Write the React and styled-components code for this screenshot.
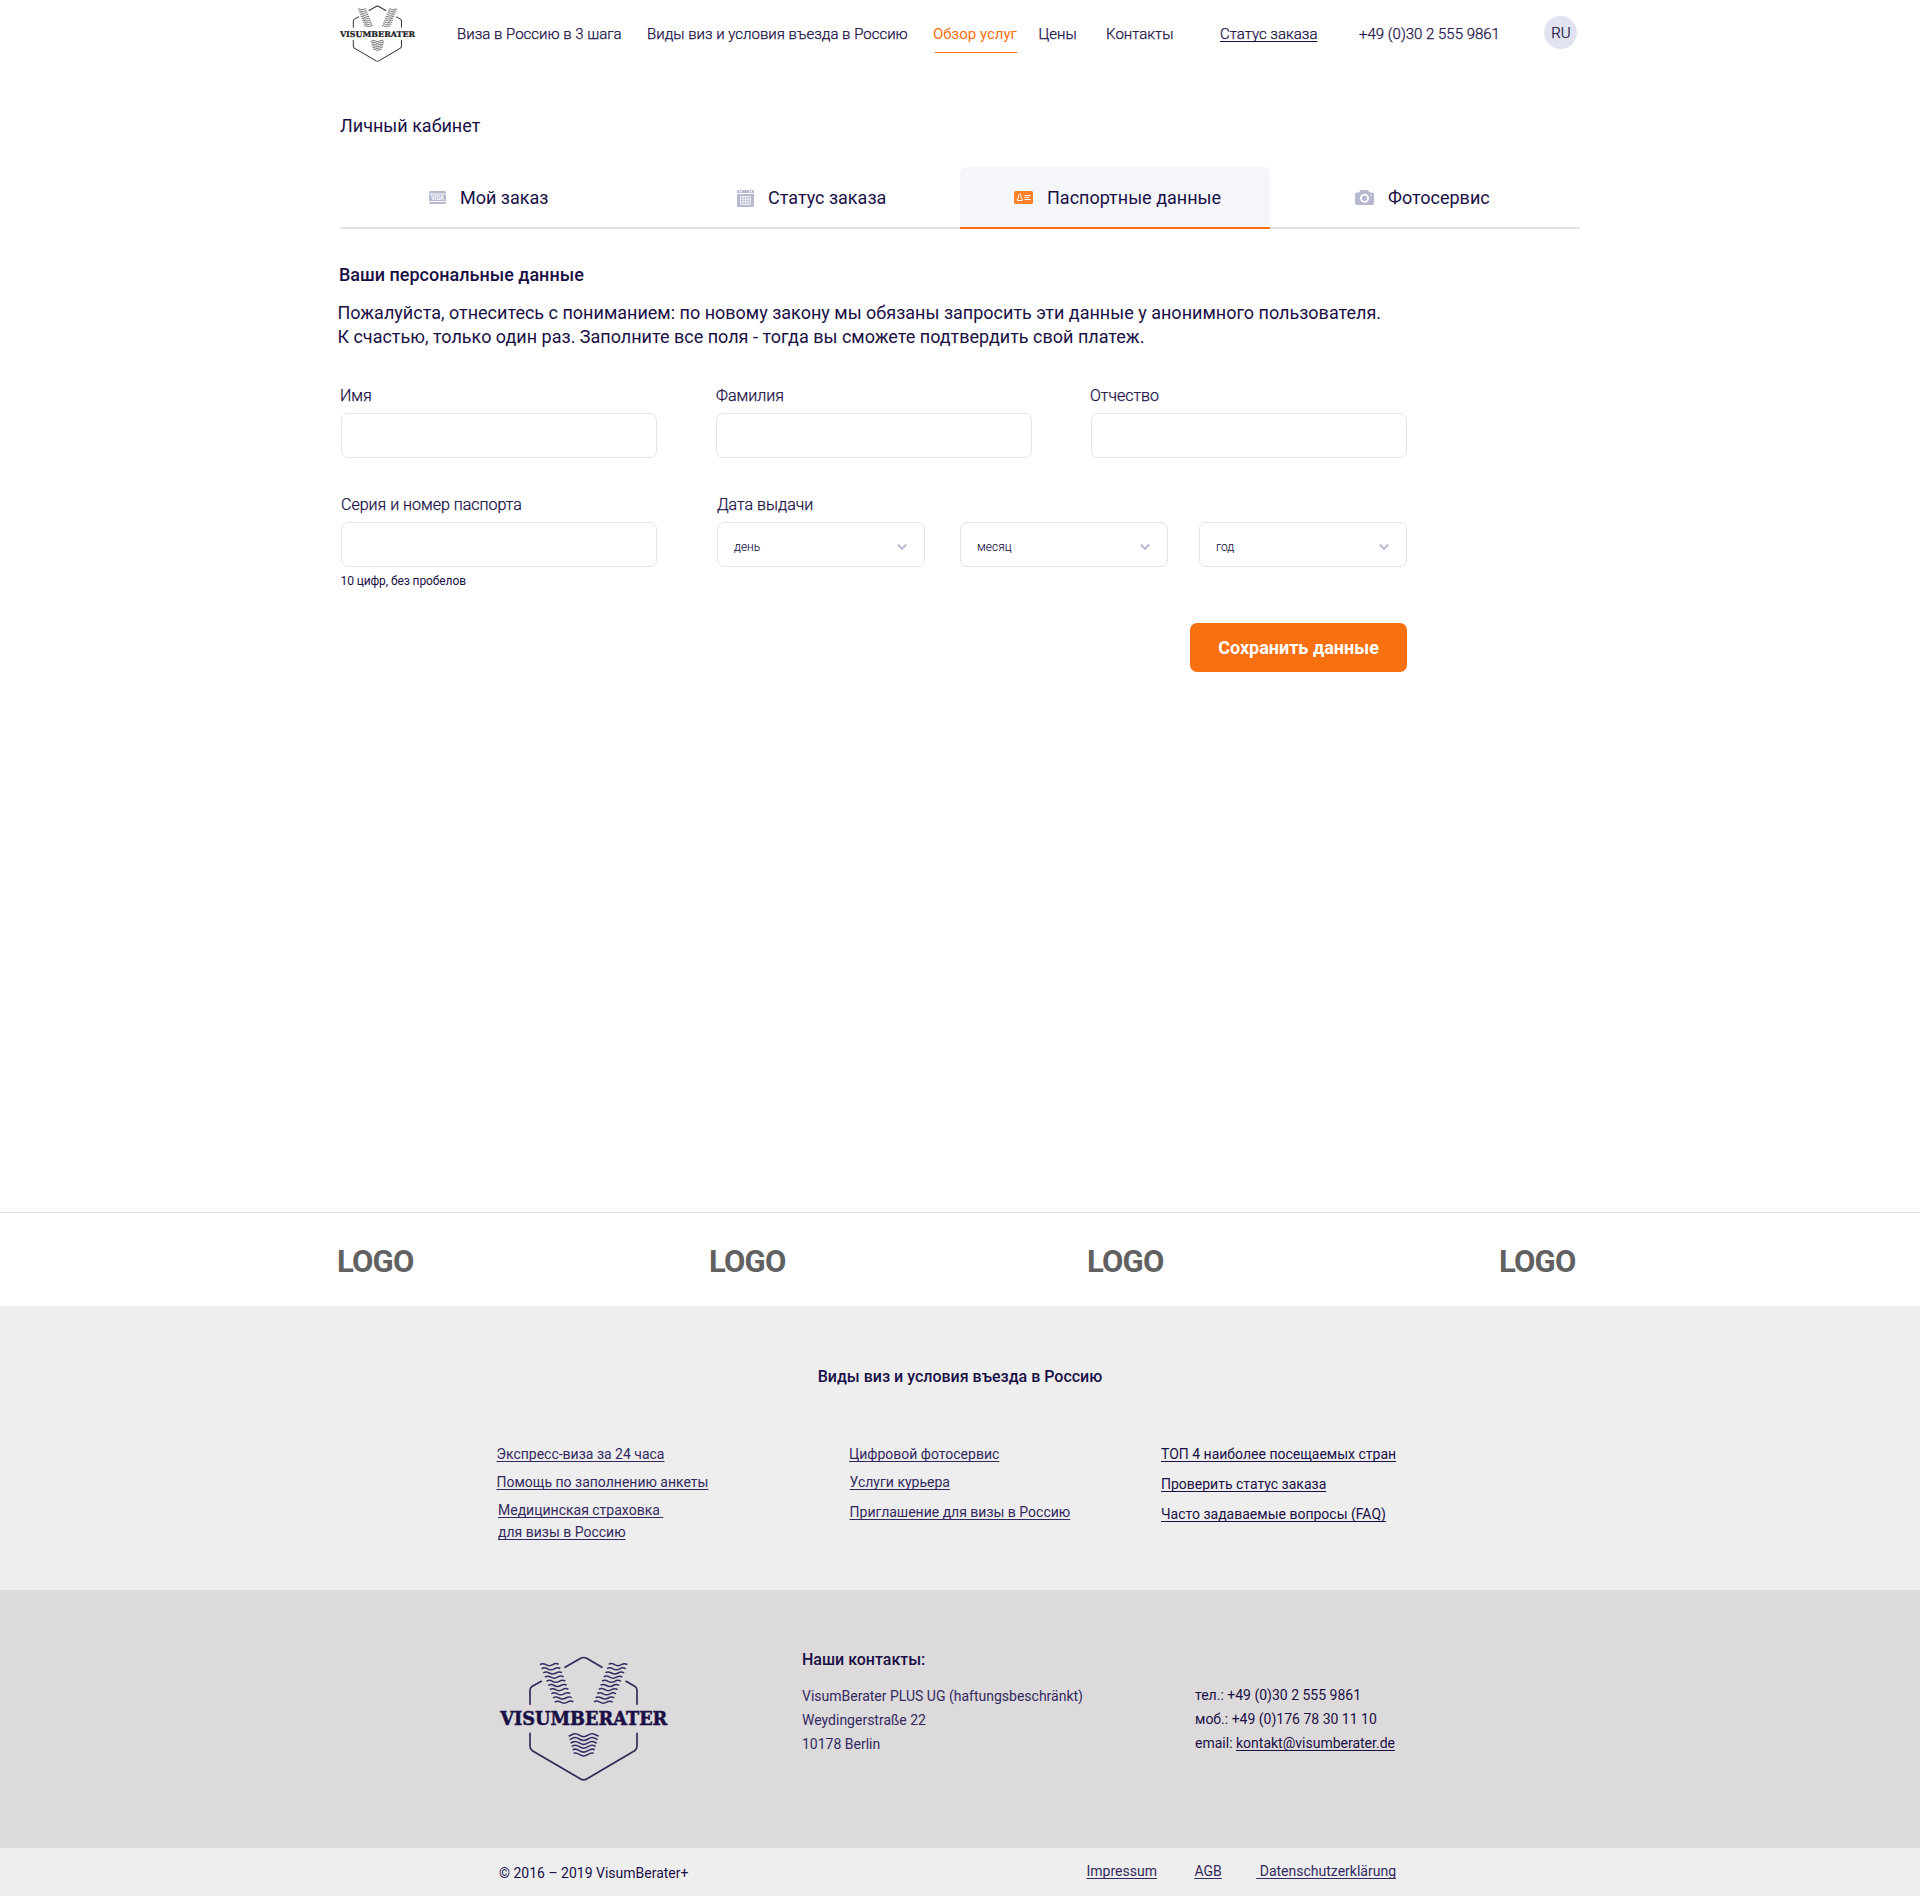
import React from "react";
import styled, { createGlobalStyle } from "styled-components";

const INK = "#1a1046";
const SOFT = "#332960";
const ORANGE = "#f97010";
const MUTED = "#b6b9d0";

const GlobalStyle = createGlobalStyle`
  *, *::before, *::after { box-sizing: border-box; }
  body { margin: 0; background: #fff; color: ${INK}; font-family: Roboto, sans-serif; }
  a { color: inherit; text-decoration: none; }
`;

const Page = styled.div`
  display: flex;
  flex-direction: column;
  width: 1920px;
  height: 1896px;
`;

const Main = styled.main`
  width: 1240px;
  height: 1212px;
  margin: 0 auto;
`;

/* ---------- header ---------- */

const Header = styled.header`
  display: grid;
  grid-template-columns: 117px 190px 286px 105.5px 67.5px 114px 139px 185px 33px;
  align-items: start;
  height: 113px;
  white-space: nowrap;
`;

const HeaderLogo = styled.a`
  display: block;
  margin: 5px 0 0 -2px;
`;

const NavLink = styled.a`
  justify-self: start;
  margin-top: 24px;
  font-size: 15px;
  line-height: 20px;
  font-weight: ${(p) => (p.$active ? 400 : 300)};
  color: ${(p) => (p.$active ? ORANGE : INK)};
  -webkit-text-stroke: ${(p) => (p.$active ? "0" : "0.25px")};
  text-decoration: ${(p) => (p.$underline ? "underline" : "none")};
  text-decoration-thickness: 1px;
  text-underline-offset: 2px;
  text-decoration-skip-ink: none;

  &::after {
    content: "";
    display: ${(p) => (p.$active ? "block" : "none")};
    height: 1px;
    margin: 8px 0 0 2px;
    background: ${ORANGE};
  }
`;

const Language = styled.button`
  width: 33px;
  height: 33px;
  margin: 16px 0 0;
  padding: 1px 0 0 1px;
  border: 0;
  border-radius: 50%;
  background: #e1e3f0;
  color: ${INK};
  font: 300 15px/32px Roboto, sans-serif;
  -webkit-text-stroke: 0.25px;
`;

/* ---------- cabinet ---------- */

const PageTitle = styled.h1`
  margin: 0 0 29px;
  font-size: 18px;
  line-height: 25px;
  font-weight: 400;
`;

const Tabs = styled.nav`
  display: grid;
  grid-template-columns: repeat(4, 310px);
  height: 62px;
`;

const Tab = styled.a`
  display: flex;
  align-items: center;
  gap: 14px;
  padding: 2px 0 0 ${(p) => p.$indent}px;
  border-bottom: 2px solid ${(p) => (p.$active ? ORANGE : "#e4e4e4")};
  border-radius: ${(p) => (p.$active ? "6px 6px 0 0" : "0")};
  background: ${(p) => (p.$active ? "#f5f6fa" : "transparent")};
  font-size: 18px;
  line-height: 24px;
`;

const SectionTitle = styled.h2`
  margin: 34px 0 0 -1px;
  font-size: 18px;
  line-height: 24px;
  font-weight: 500;
`;

const Notice = styled.p`
  margin: 14px 0 0 -2.6px;
  font-size: 18px;
  line-height: 24px;
  white-space: nowrap;
`;

const Form = styled.form`
  width: 1067px;
`;

const FieldRow = styled.div`
  display: grid;
  grid-template-columns: ${(p) => p.$columns};
  margin-left: 1px;
  margin-top: ${(p) => p.$top}px;
`;

const Field = styled.div`
  display: flex;
  flex-direction: column;
`;

const Label = styled.label`
  margin: 0 0 7px ${(p) => p.$shift || 0}px;
  font-size: 16px;
  line-height: 20px;
  font-weight: 300;
  white-space: nowrap;
  -webkit-text-stroke: 0.25px;
`;

const Input = styled.input`
  width: 316px;
  height: 45px;
  border: 1px solid #e3e3ef;
  border-radius: 7px;
  background: #fff;
  outline: none;
`;

const Select = styled.button`
  display: flex;
  justify-content: space-between;
  align-items: center;
  width: 208px;
  height: 45px;
  margin: 0;
  padding: 5px 17px 0 16px;
  border: 1px solid #e3e3ef;
  border-radius: 7px;
  background: #fff;
  color: ${INK};
  font: 300 12px/16px Roboto, sans-serif;
  -webkit-text-stroke: 0.1px;
`;

const Hint = styled.small`
  margin: 6px 0 0 -0.5px;
  font-size: 12px;
  line-height: 16px;
  letter-spacing: -0.1px;
`;

const Submit = styled.button`
  display: block;
  width: 217px;
  height: 49px;
  margin: 34px 0 0 auto;
  padding: 0;
  border: 0;
  border-radius: 7px;
  background: ${ORANGE};
  color: #fff;
  font: 700 18px/49px Roboto, sans-serif;
`;

/* ---------- partners ---------- */

const Partners = styled.section`
  height: 94px;
  border-top: 1px solid #e2e2e2;
`;

const PartnerRow = styled.div`
  display: grid;
  grid-template-columns: 372px 378px 412px auto;
  width: 1246px;
  margin: 31px auto 0;
  color: #616161;
  font-size: 31px;
  line-height: 36px;
  font-weight: 700;
  letter-spacing: -0.8px;
`;

/* ---------- footer ---------- */

const Services = styled.section`
  height: 284px;
  padding-top: 61px;
  background: #eee;
`;

const FooterTitle = styled.h3`
  margin: 0;
  text-align: ${(p) => (p.$center ? "center" : "left")};
  font-size: 16px;
  line-height: 20px;
  font-weight: 500;
`;

const LinkColumns = styled.div`
  display: grid;
  grid-template-columns: 352.5px 312px auto;
  width: 927px;
  margin: 57px auto 0;
`;

const LinkColumn = styled.div`
  display: flex;
  flex-direction: column;
  align-items: flex-start;
  color: ${(p) => p.$color};
`;

const FooterLink = styled.a`
  margin: ${(p) => p.$top || 0}px 0 0 ${(p) => p.$left || 0}px;
  font-size: 14px;
  line-height: ${(p) => p.$leading || 20}px;
  white-space: pre;
  text-decoration: underline 1px;
  text-underline-offset: 2px;
  text-decoration-skip-ink: none;
`;

const Contacts = styled.section`
  height: 258px;
  background: #dcdadb;
`;

const ContactGrid = styled.div`
  display: grid;
  grid-template-columns: 306px 393px auto;
  width: 928px;
  margin: 0 auto;
  padding-top: 60px;
`;

const FooterLogo = styled.div`
  margin-top: 5px;
`;

const Address = styled.address`
  margin-top: ${(p) => p.$top}px;
  color: ${(p) => p.$color};
  font-style: normal;
  font-size: 14px;
  line-height: 24px;
  white-space: nowrap;
`;

const Legal = styled.footer`
  height: 48px;
  background: #eee;
`;

const LegalRow = styled.div`
  display: flex;
  justify-content: space-between;
  width: 922px;
  margin: 0 auto;
  padding-top: 13px;
`;

const Copyright = styled.span`
  margin-top: 2px;
  font-size: 14px;
  line-height: 20px;
`;

const LegalLinks = styled.div`
  display: flex;
  gap: 37.5px;
  margin-right: 25px;
  color: ${SOFT};
`;

/* ---------- drawings ---------- */

const LogoSvg = styled.svg`
  display: block;
  overflow: visible;
`;

const ARM_ROWS = Array.from({ length: 10 }, (_, i) => ({ x: 150 + i * 4.9, y: 75 + i * 12.5 }));
const TIP_ROWS = Array.from({ length: 6 }, (_, i) => 289 + i * 11.6);

function Logo({ width, ink, wave, stroke, waveStroke, id }) {
  return (
    <LogoSvg width={width} height={(width * 384) / 525} viewBox="18 45 525 384" fill="none">
      <g stroke={ink} strokeWidth={stroke} strokeLinecap="round" opacity=".88">
        <path d="M225 82 272 55Q281 50 290 55L336 82" />
        <path d="M154 124 127 139Q120 143 120 151V193" />
        <path d="M408 124 434 139Q441 143 441 151V193" />
        <path d="M120 280V319Q120 328 127 332L272 417Q281 422 290 417L434 332Q441 328 441 319V280" />
      </g>
      <clipPath id={id}>
        <path d="M231 272H331L306 356H256Z" />
      </clipPath>
      <g stroke={wave} strokeWidth={waveStroke}>
        {ARM_ROWS.map(({ x, y }) => (
          <g key={y}>
            <path d={`M${x} ${y - 1}q8 -6 18 0t20 0t18 -1`} />
            <path d={`M${562 - x} ${y - 1}q-8 -6 -18 0t-20 0t-18 -1`} />
          </g>
        ))}
        <g clipPath={`url(#${id})`}>
          {TIP_ROWS.map((y) => (
            <path key={y} d={`M232 ${y}C242 ${y} 246 ${y - 8} 256 ${y - 8}S270 ${y + 1} 281 ${y + 1}S296 ${y - 8} 306 ${y - 8}S320 ${y} 330 ${y}`} />
          ))}
        </g>
      </g>
      <text
        x="31"
        y="256"
        textLength="501"
        lengthAdjust="spacingAndGlyphs"
        fill={ink}
        stroke={ink}
        strokeWidth="1.6"
        fontFamily="'DejaVu Serif', serif"
        fontWeight="700"
        fontSize="53"
      >
        VISUMBERATER
      </text>
    </LogoSvg>
  );
}

const VisaIcon = () => (
  <svg width="17" height="14" viewBox="0 0 17 14">
    <path fill={MUTED} d="M1.5 0h14A1.5 1.5 0 0 1 17 1.500V2.500H0V1.500A1.500 1.500 0 0 1 1.500 0zM0 3.500h17v6.500H0zM0 11h17v.5a1.500 1.500 0 0 1-1.500 1.500h-14A1.500 1.500 0 0 1 0 11.500z" />
    <text x="2" y="9.200" textLength="13" lengthAdjust="spacingAndGlyphs" fill="#fff" fontSize="6.500" fontWeight="700" fontFamily="Roboto, sans-serif">VISA</text>
  </svg>
);

const CalendarIcon = () => (
  <svg width="17" height="18" viewBox="0 0 17 18">
    <path fill={MUTED} d="M1 1h15a1 1 0 0 1 1 1v2H0V2a1 1 0 0 1 1-1zM0 5h17v12a1 1 0 0 1-1 1H1a1 1 0 0 1-1-1z" />
    <path fill={MUTED} stroke="#fff" strokeWidth=".7" d="M2.500 0h2v3h-2zM12.500 0h2v3h-2z" />
    <path fill="none" stroke="#fff" strokeWidth=".7" d="M3.500 7.500h10v8h-10zM6 7.500v8M8.500 7.500v8M11 7.500v8M3.500 10.200h10M3.500 12.900h10" />
  </svg>
);

const PassportIcon = () => (
  <svg width="19" height="14" viewBox="0 0 19 14">
    <rect width="19" height="13" rx="1.800" fill="#fb8027" />
    <g fill="none" stroke="#fff">
      <path strokeWidth="1" d="M4.700 6.800C4.200 6 4.200 3.200 5.700 3.200S7.200 6 6.700 6.800L8.200 7.900V9.500H3.200V7.900Z" />
      <path strokeWidth="1" d="M10.500 4.500h6M10.500 6.500h4.500M10.500 8.500h6" />
    </g>
  </svg>
);

const CameraIcon = () => (
  <svg width="19" height="16" viewBox="0 0 19 16">
    <path fill={MUTED} d="M5.500 0h7.500l1.500 2.500h2.700A1.800 1.800 0 0 1 19 4.300v8.900a1.800 1.800 0 0 1-1.800 1.800H1.800A1.800 1.800 0 0 1 0 13.200V4.300a1.800 1.800 0 0 1 1.800-1.800H4z" />
    <circle cx="9.500" cy="8.300" r="3.600" fill="none" stroke="#fff" strokeWidth="1.800" />
    <circle cx="16.200" cy="5.200" r=".7" fill="#fff" />
  </svg>
);

const Chevron = () => (
  <svg width="10" height="8" viewBox="0 0 10 8" fill="none">
    <path d="M.8 1.500 5 5.800 9.200 1.500" stroke={MUTED} strokeWidth="1.900" />
  </svg>
);

/* ---------- data ---------- */

const NAV = [
  { text: "Виза в Россию в 3 шага" },
  { text: "Виды виз и условия въезда в Россию" },
  { text: "Обзор услуг", active: true },
  { text: "Цены" },
  { text: "Контакты" },
  { text: "Статус заказа", underline: true },
  { text: "+49 (0)30 2 555 9861" },
];

const TABS = [
  { text: "Мой заказ", Icon: VisaIcon, indent: 89 },
  { text: "Статус заказа", Icon: CalendarIcon, indent: 87 },
  { text: "Паспортные данные", Icon: PassportIcon, indent: 54, active: true },
  { text: "Фотосервис", Icon: CameraIcon, indent: 85 },
];

export default function App() {
  return (
    <Page>
      <GlobalStyle />
      <Main>
        <Header>
          <HeaderLogo href="#">
            <Logo id="tip-small" width={78.8} ink="#1c1c1c" wave="#707070" stroke={6.8} waveStroke={6.4} />
          </HeaderLogo>
          {NAV.map((n) => (
            <NavLink key={n.text} href="#" $active={n.active} $underline={n.underline}>{n.text}</NavLink>
          ))}
          <Language>RU</Language>
        </Header>

        <PageTitle>Личный кабинет</PageTitle>
        <Tabs>
          {TABS.map(({ text, Icon, indent, active }) => (
            <Tab key={text} href="#" $indent={indent} $active={active}>
              <Icon />
              {text}
            </Tab>
          ))}
        </Tabs>

        <SectionTitle>Ваши персональные данные</SectionTitle>
        <Notice>
          Пожалуйста, отнеситесь с пониманием: по новому закону мы обязаны запросить эти данные у анонимного пользователя.
          <br />
          К счастью, только один раз. Заполните все поля - тогда вы сможете подтвердить свой платеж.
        </Notice>

        <Form>
          <FieldRow $top={37} $columns="375px 375px 316px">
            <Field>
              <Label $shift={-1}>Имя</Label>
              <Input />
            </Field>
            <Field>
              <Label>Фамилия</Label>
              <Input />
            </Field>
            <Field>
              <Label $shift={-1}>Отчество</Label>
              <Input />
            </Field>
          </FieldRow>
          <FieldRow $top={37} $columns="376px 243px 239px 208px">
            <Field>
              <Label>Серия и номер паспорта</Label>
              <Input />
              <Hint>10 цифр, без пробелов</Hint>
            </Field>
            <Field>
              <Label>Дата выдачи</Label>
              <Select type="button">день<Chevron /></Select>
            </Field>
            <Field>
              <Label>&nbsp;</Label>
              <Select type="button">месяц<Chevron /></Select>
            </Field>
            <Field>
              <Label>&nbsp;</Label>
              <Select type="button">год<Chevron /></Select>
            </Field>
          </FieldRow>
          <Submit type="button">Сохранить данные</Submit>
        </Form>
      </Main>

      <Partners>
        <PartnerRow>
          <span>LOGO</span>
          <span>LOGO</span>
          <span>LOGO</span>
          <span>LOGO</span>
        </PartnerRow>
      </Partners>

      <Services>
        <FooterTitle $center>Виды виз и условия въезда в Россию</FooterTitle>
        <LinkColumns>
          <LinkColumn $color={SOFT}>
            <FooterLink href="#">Экспресс-виза за 24 часа</FooterLink>
            <FooterLink href="#" $top={8}>Помощь по заполнению анкеты</FooterLink>
            <FooterLink href="#" $top={7} $left={1.5} $leading={22}>{"Медицинская страховка \nдля визы в Россию"}</FooterLink>
          </LinkColumn>
          <LinkColumn $color={SOFT}>
            <FooterLink href="#">Цифровой фотосервис</FooterLink>
            <FooterLink href="#" $top={8} $left={0.6}>Услуги курьера</FooterLink>
            <FooterLink href="#" $top={10} $left={0.6}>Приглашение для визы в Россию</FooterLink>
          </LinkColumn>
          <LinkColumn $color={INK}>
            <FooterLink href="#">ТОП 4 наиболее посещаемых стран</FooterLink>
            <FooterLink href="#" $top={10}>Проверить статус заказа</FooterLink>
            <FooterLink href="#" $top={10}>Часто задаваемые вопросы (FAQ)</FooterLink>
          </LinkColumn>
        </LinkColumns>
      </Services>

      <Contacts>
        <ContactGrid>
          <FooterLogo>
            <Logo id="tip-large" width={175} ink={INK} wave="#352c64" stroke={5} waveStroke={4.6} />
          </FooterLogo>
          <div>
            <FooterTitle>Наши контакты:</FooterTitle>
            <Address $top={14} $color={SOFT}>
              VisumBerater PLUS UG (haftungsbeschränkt)<br />
              Weydingerstraße 22<br />
              10178 Berlin
            </Address>
          </div>
          <Address $top={33} $color={INK}>
            тел.: +49 (0)30 2 555 9861<br />
            моб.: +49 (0)176 78 30 11 10<br />
            email: <FooterLink href="#">kontakt@visumberater.de</FooterLink>
          </Address>
        </ContactGrid>
      </Contacts>

      <Legal>
        <LegalRow>
          <Copyright>© 2016 – 2019 VisumBerater+</Copyright>
          <LegalLinks>
            <FooterLink href="#">Impressum</FooterLink>
            <FooterLink href="#">AGB</FooterLink>
            <FooterLink href="#" $left={-3}>{" Datenschutzerklärung"}</FooterLink>
          </LegalLinks>
        </LegalRow>
      </Legal>
    </Page>
  );
}
